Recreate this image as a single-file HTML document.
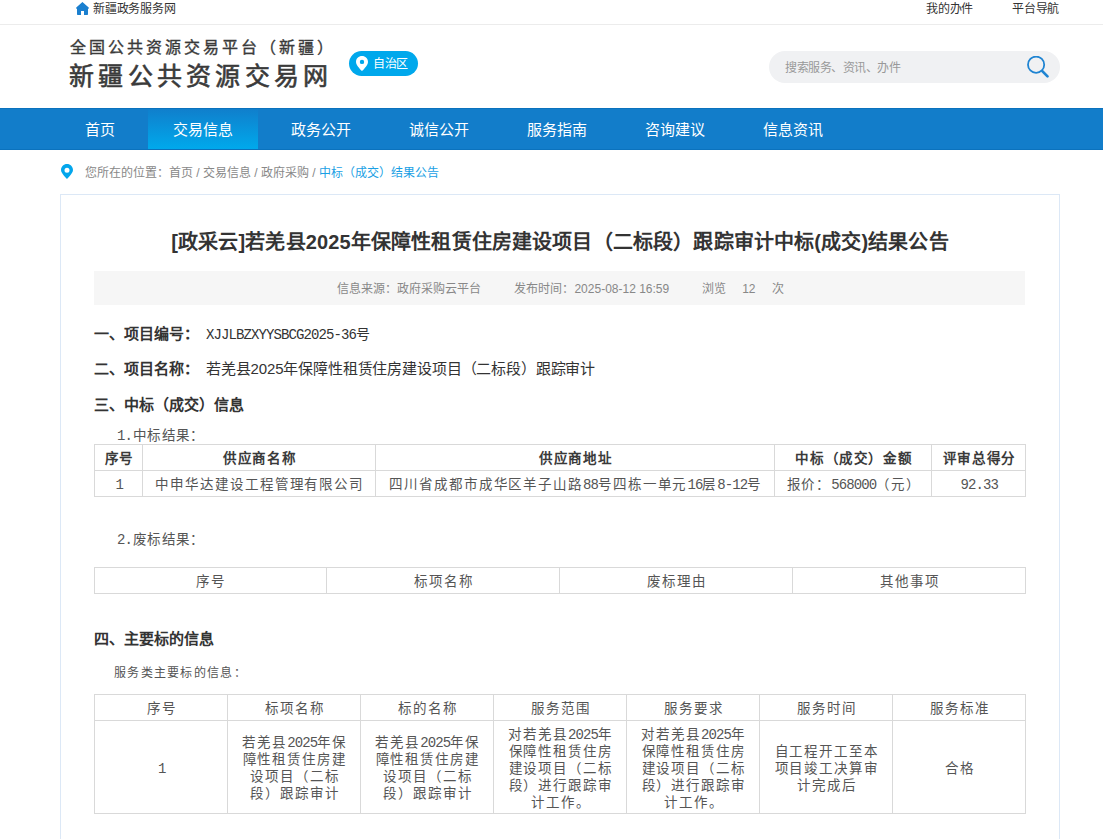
<!DOCTYPE html>
<html lang="zh-CN">
<head>
<meta charset="utf-8">
<style>
*{margin:0;padding:0;box-sizing:border-box}
html,body{width:1103px;height:839px;overflow:hidden;background:#fff}
body{font-family:"Liberation Sans",sans-serif;color:#333;position:relative}
.abs{position:absolute;white-space:nowrap}
.topbar{position:absolute;left:0;top:0;width:1103px;height:25px;border-bottom:1px solid #ececec}
.t12{font-size:12px;line-height:16px;color:#333}
.nav{position:absolute;left:0;top:108px;width:1103px;height:42px;background:#127dca;border-top:1px solid #0b72bd;border-bottom:1px solid #0b72bd}
.nav .it{position:absolute;top:0px;height:42px;width:110px;text-align:center;color:#fff;font-size:15px;line-height:42px}
.nav .act{height:40px;background:linear-gradient(#107fcc,#00a9ec)}
.box{position:absolute;left:60px;top:194px;width:1000px;height:700px;border:1px solid #dce8f6;border-bottom:none}
.meta{position:absolute;left:94px;top:271px;width:931px;height:34px;background:#f6f6f6;font-size:12px;color:#888;line-height:34px;text-align:center;padding:1px 0 0 2px}
.h{font-weight:bold;font-size:15px;color:#333;line-height:20px}
.v{font-size:14px;color:#333;line-height:20px}
table{position:absolute;border-collapse:collapse;table-layout:fixed}
td{border:1px solid #d9d9d9;text-align:center;font-size:13.5px;letter-spacing:1.9px;color:#555;padding:2px 0 0 1.5px;vertical-align:middle;line-height:17px;white-space:nowrap}
.b td{font-weight:bold;letter-spacing:1.6px;color:#3a3a3a}
.lh td{line-height:17px}
td .m{line-height:0}
i{font-style:normal}
.m{font-family:"Liberation Mono",monospace;font-size:14px;letter-spacing:-0.9px}
.ss{font-size:13.5px;letter-spacing:1.5px;color:#555;line-height:17px}
</style>
</head>
<body>
<div class="topbar"></div>
<svg class="abs" style="left:0;top:0" width="100" height="20" viewBox="0 0 100 20"><path d="M82.4 2 L76.3 7.5 Q75.6 8.5 76.6 8.8 L77 8.8 L77 14.2 Q77 14.9 77.7 14.9 L81 14.9 L81 11 L84 11 L84 14.9 L87.3 14.9 Q88 14.9 88 14.2 L88 8.8 L88.4 8.8 Q89.4 8.5 88.7 7.5 Z" fill="#1a7fcf"/></svg>
<div class="abs t12" style="left:93px;top:1px;letter-spacing:-0.2px">新疆政务服务网</div>
<div class="abs t12" style="left:926px;top:1px;letter-spacing:-0.2px">我的办件</div>
<div class="abs t12" style="left:1012px;top:1px;letter-spacing:-0.2px">平台导航</div>

<div class="abs" style="left:70px;top:37px;font-size:16px;line-height:22px;letter-spacing:3px;color:#3a3a3a;-webkit-text-stroke:0.35px #3a3a3a">全国公共资源交易平台（新疆）</div>
<div class="abs" style="left:69px;top:60px;font-size:25px;line-height:32px;letter-spacing:4.3px;color:#3a3a3a;-webkit-text-stroke:0.6px #3a3a3a">新疆公共资源交易网</div>

<div class="abs" style="left:349px;top:51px;width:69px;height:25px;border-radius:13px;background:#00a8ec"></div>
<svg class="abs" style="left:356px;top:56px" width="12" height="15" viewBox="0 0 12 15"><path d="M6 0 C2.6 0 0 2.6 0 5.9 C0 9.4 6 15 6 15 C6 15 12 9.4 12 5.9 C12 2.6 9.4 0 6 0 Z M6 3.7 A2.2 2.2 0 1 1 6 8.1 A2.2 2.2 0 1 1 6 3.7 Z" fill="#fff" fill-rule="evenodd"/></svg>
<div class="abs" style="left:373px;top:55px;font-size:12px;line-height:18px;color:#fff;letter-spacing:-0.3px">自治区</div>

<div class="abs" style="left:769px;top:51px;width:291px;height:32px;border-radius:16px;background:#f0f1f3"></div>
<div class="abs" style="left:785px;top:59px;font-size:12px;line-height:18px;color:#999;letter-spacing:-0.5px">搜索服务、资讯、办件</div>
<svg class="abs" style="left:1026px;top:56px" width="24" height="24" viewBox="0 0 24 24"><circle cx="10.1" cy="8.7" r="8.1" fill="none" stroke="#1f84d2" stroke-width="1.8"/><path d="M16.3 15.1 L21.5 20.4" stroke="#1f84d2" stroke-width="2.7" stroke-linecap="round"/></svg>

<div class="nav">
  <div class="it" style="left:60px;width:80px">首页</div>
  <div class="it act" style="left:148px">交易信息</div>
  <div class="it" style="left:266px">政务公开</div>
  <div class="it" style="left:384px">诚信公开</div>
  <div class="it" style="left:502px">服务指南</div>
  <div class="it" style="left:620px">咨询建议</div>
  <div class="it" style="left:738px">信息资讯</div>
</div>

<svg class="abs" style="left:61px;top:164px" width="12" height="15" viewBox="0 0 12 15"><path d="M6 0 C2.6 0 0 2.7 0 6.1 C0 9.6 6 15 6 15 C6 15 12 9.6 12 6.1 C12 2.7 9.4 0 6 0 Z M6 3.7 A2.5 2.5 0 1 1 6 8.7 A2.5 2.5 0 1 1 6 3.7 Z" fill="#03a6ec" fill-rule="evenodd"/></svg>
<div class="abs" style="left:85px;top:165px;font-size:12px;line-height:17px;color:#888">您所在的位置：首页 / 交易信息 / 政府采购 / <span style="color:#1a9fe4">中标（成交）结果公告</span></div>

<div class="box"></div>
<div class="abs" style="left:0;top:229px;width:1120px;text-align:center;font-size:20px;line-height:26px;font-weight:bold;color:#333;letter-spacing:0.15px">[政采云]若羌县2025年保障性租赁住房建设项目（二标段）跟踪审计中标(成交)结果公告</div>
<div class="meta"><span>信息来源：政府采购云平台</span><span style="margin-left:33px">发布时间：2025-08-12 16:59</span><span style="margin-left:33px">浏览</span><span style="margin-left:16px">12</span><span style="margin-left:16px">次</span></div>

<div class="abs h" style="left:94px;top:324px">一、项目编号：</div>
<div class="abs v" style="left:206px;top:324px"><i class="m">XJJLBZXYYSBCG2025-36</i>号</div>
<div class="abs h" style="left:94px;top:359px">二、项目名称：</div>
<div class="abs v" style="left:206px;top:359px;font-size:15px;letter-spacing:-0.15px">若羌县2025年保障性租赁住房建设项目（二标段）跟踪审计</div>
<div class="abs h" style="left:94px;top:395px">三、中标（成交）信息</div>
<div class="abs ss" style="left:117px;top:427px;letter-spacing:1.3px"><i class="m" style="margin-right:1px">1.</i>中标结果：</div>

<table style="left:94px;top:444px;width:931px">
<colgroup><col style="width:48px"><col style="width:233px"><col style="width:399px"><col style="width:157px"><col style="width:94px"></colgroup>
<tr style="height:26px" class="b"><td>序号</td><td>供应商名称</td><td>供应商地址</td><td>中标（成交）金额</td><td>评审总得分</td></tr>
<tr style="height:26px"><td><i class="m">1</i></td><td>中申华达建设工程管理有限公司</td><td>四川省成都市成华区羊子山路<i class="m">88</i>号四栋一单元<i class="m">16</i>层<i class="m">8-12</i>号</td><td>报价：<i class="m">568000</i>（元）</td><td><i class="m">92.33</i></td></tr>
</table>

<div class="abs ss" style="left:117px;top:531px;letter-spacing:1.3px"><i class="m" style="margin-right:1px">2.</i>废标结果：</div>
<table style="left:94px;top:567px;width:931px">
<colgroup><col style="width:232px"><col style="width:233px"><col style="width:233px"><col style="width:233px"></colgroup>
<tr style="height:26px"><td>序号</td><td>标项名称</td><td>废标理由</td><td>其他事项</td></tr>
</table>

<div class="abs h" style="left:94px;top:629px">四、主要标的信息</div>
<div class="abs ss" style="left:114px;top:665px;font-size:12px;letter-spacing:1.3px">服务类主要标的信息：</div>

<table style="left:94px;top:694px;width:931px">
<colgroup><col style="width:133px"><col style="width:133px"><col style="width:133px"><col style="width:133px"><col style="width:133px"><col style="width:133px"><col style="width:133px"></colgroup>
<tr style="height:26px"><td>序号</td><td>标项名称</td><td>标的名称</td><td>服务范围</td><td>服务要求</td><td>服务时间</td><td>服务标准</td></tr>
<tr style="height:93px" class="lh"><td><i class="m">1</i></td><td>若羌县<i class="m">2025</i>年保<br>障性租赁住房建<br>设项目（二标<br>段）跟踪审计</td><td>若羌县<i class="m">2025</i>年保<br>障性租赁住房建<br>设项目（二标<br>段）跟踪审计</td><td>对若羌县<i class="m">2025</i>年<br>保障性租赁住房<br>建设项目（二标<br>段）进行跟踪审<br>计工作。</td><td>对若羌县<i class="m">2025</i>年<br>保障性租赁住房<br>建设项目（二标<br>段）进行跟踪审<br>计工作。</td><td>自工程开工至本<br>项目竣工决算审<br>计完成后</td><td>合格</td></tr>
</table>
</body>
</html>
